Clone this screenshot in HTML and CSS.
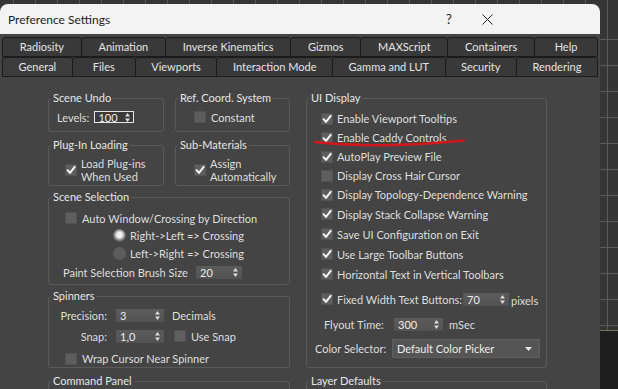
FILE: index.html
```html
<!DOCTYPE html>
<html lang="en">
<head>
    <meta charset="UTF-8">
    <meta name="viewport" content="width=device-width, initial-scale=1.0">
    <title>Preference Settings</title>
    <link rel="stylesheet" href="styles.css">
</head>
<body>

<div class="window">
    <div class="titlebar">
        <span class="title">Preference Settings</span>
        <span class="title-btn">?</span>
        <span class="title-btn">
            <svg class="close-icon" viewBox="0 0 11 11"><path d="M0.5 0.5 L10.5 10.5 M10.5 0.5 L0.5 10.5"/></svg>
        </span>
    </div>

    <div class="dialog">
        <div class="tabs">
            <div class="tab-row">
                <div class="tab">Radiosity</div>
                <div class="tab">Animation</div>
                <div class="tab">Inverse Kinematics</div>
                <div class="tab">Gizmos</div>
                <div class="tab">MAXScript</div>
                <div class="tab">Containers</div>
                <div class="tab">Help</div>
            </div>
            <div class="tab-row">
                <div class="tab active">General</div>
                <div class="tab">Files</div>
                <div class="tab">Viewports</div>
                <div class="tab">Interaction Mode</div>
                <div class="tab">Gamma and LUT</div>
                <div class="tab">Security</div>
                <div class="tab">Rendering</div>
            </div>
        </div>

        <div class="panel">
            <!-- left column -->
            <div class="col col-left">
                <div class="pair">
                    <div class="group undo">
                        <span class="group-title">Scene Undo</span>
                        <div class="row levels-row">
                            <span>Levels:</span>
                            <div class="spin focus w40">
                                <span>100</span>
                                <svg class="arrows" viewBox="0 0 5 9"><path d="M2.5 0 L5 3.5 H0Z M0 5.5 H5 L2.5 9Z"/></svg>
                            </div>
                        </div>
                    </div>
                    <div class="group undo">
                        <span class="group-title">Ref. Coord. System</span>
                        <div class="row single-row">
                            <span class="cb"></span>
                            <span>Constant</span>
                        </div>
                    </div>
                </div>

                <div class="pair gap-13">
                    <div class="group plugin">
                        <span class="group-title">Plug-In Loading</span>
                        <div class="row two-line left-16">
                            <span class="cb on"><svg viewBox="0 0 10 10"><path d="M1.6 5.2 L4 7.9 L8.7 1.8"/></svg></span>
                            <span class="lines">Load Plug-ins<br>When Used</span>
                        </div>
                    </div>
                    <div class="group plugin">
                        <span class="group-title">Sub-Materials</span>
                        <div class="row two-line left-18">
                            <span class="cb on"><svg viewBox="0 0 10 10"><path d="M1.6 5.2 L4 7.9 L8.7 1.8"/></svg></span>
                            <span class="lines">Assign<br>Automatically</span>
                        </div>
                    </div>
                </div>

                <div class="group selection gap-11">
                    <span class="group-title">Scene Selection</span>
                    <div class="row h18 left-16 top-5">
                        <span class="cb"></span>
                        <span>Auto Window/Crossing by Direction</span>
                    </div>
                    <div class="row h17 left-64">
                        <span class="radio on"></span>
                        <span>Right-&gt;Left =&gt; Crossing</span>
                    </div>
                    <div class="row h18 left-64">
                        <span class="radio"></span>
                        <span>Left-&gt;Right =&gt; Crossing</span>
                    </div>
                    <div class="row h20 left-14">
                        <span class="paint-label">Paint Selection Brush Size</span>
                        <div class="spin w46">
                            <span>20</span>
                            <svg class="arrows" viewBox="0 0 5 9"><path d="M2.5 0 L5 3.5 H0Z M0 5.5 H5 L2.5 9Z"/></svg>
                        </div>
                    </div>
                </div>

                <div class="group spinners gap-11">
                    <span class="group-title">Spinners</span>
                    <div class="row h14 left-6 top-5">
                        <span class="spin-label">Precision:</span>
                        <div class="spin w48">
                            <span>3</span>
                            <svg class="arrows" viewBox="0 0 5 9"><path d="M2.5 0 L5 3.5 H0Z M0 5.5 H5 L2.5 9Z"/></svg>
                        </div>
                        <span class="after">Decimals</span>
                    </div>
                    <div class="row h14 left-6 top-7">
                        <span class="spin-label">Snap:</span>
                        <div class="spin w48">
                            <span>1,0</span>
                            <svg class="arrows" viewBox="0 0 5 9"><path d="M2.5 0 L5 3.5 H0Z M0 5.5 H5 L2.5 9Z"/></svg>
                        </div>
                        <span class="cb snap-cb"></span>
                        <span>Use Snap</span>
                    </div>
                    <div class="row h15 left-16 top-8">
                        <span class="cb"></span>
                        <span>Wrap Cursor Near Spinner</span>
                    </div>
                </div>

                <div class="group stub gap-13">
                    <span class="group-title">Command Panel</span>
                </div>
            </div>

            <!-- right column -->
            <div class="col col-right">
                <div class="group ui-display">
                    <span class="group-title">UI Display</span>
                    <div class="checks">
                        <div class="row h19 left-14">
                            <span class="cb on"><svg viewBox="0 0 10 10"><path d="M1.6 5.2 L4 7.9 L8.7 1.8"/></svg></span>
                            <span>Enable Viewport Tooltips</span>
                        </div>
                        <div class="row h19 left-14">
                            <span class="cb on"><svg viewBox="0 0 10 10"><path d="M1.6 5.2 L4 7.9 L8.7 1.8"/></svg></span>
                            <span>Enable Caddy Controls</span>
                        </div>
                        <div class="row h19 left-14">
                            <span class="cb on"><svg viewBox="0 0 10 10"><path d="M1.6 5.2 L4 7.9 L8.7 1.8"/></svg></span>
                            <span>AutoPlay Preview File</span>
                        </div>
                        <div class="row h19 left-14">
                            <span class="cb"></span>
                            <span>Display Cross Hair Cursor</span>
                        </div>
                        <div class="row h19 left-14">
                            <span class="cb on"><svg viewBox="0 0 10 10"><path d="M1.6 5.2 L4 7.9 L8.7 1.8"/></svg></span>
                            <span>Display Topology-Dependence Warning</span>
                        </div>
                        <div class="row h20 left-14">
                            <span class="cb on"><svg viewBox="0 0 10 10"><path d="M1.6 5.2 L4 7.9 L8.7 1.8"/></svg></span>
                            <span>Display Stack Collapse Warning</span>
                        </div>
                        <div class="row h20 left-14">
                            <span class="cb on"><svg viewBox="0 0 10 10"><path d="M1.6 5.2 L4 7.9 L8.7 1.8"/></svg></span>
                            <span>Save UI Configuration on Exit</span>
                        </div>
                        <div class="row h20 left-14">
                            <span class="cb on"><svg viewBox="0 0 10 10"><path d="M1.6 5.2 L4 7.9 L8.7 1.8"/></svg></span>
                            <span>Use Large Toolbar Buttons</span>
                        </div>
                        <div class="row h20 left-14">
                            <span class="cb on"><svg viewBox="0 0 10 10"><path d="M1.6 5.2 L4 7.9 L8.7 1.8"/></svg></span>
                            <span>Horizontal Text in Vertical Toolbars</span>
                        </div>
                        <div class="row h20 left-14 top-5">
                            <span class="cb on"><svg viewBox="0 0 10 10"><path d="M1.6 5.2 L4 7.9 L8.7 1.8"/></svg></span>
                            <span class="fixed-label">Fixed Width Text Buttons:</span>
                            <div class="spin w46">
                                <span>70</span>
                                <svg class="arrows" viewBox="0 0 5 9"><path d="M2.5 0 L5 3.5 H0Z M0 5.5 H5 L2.5 9Z"/></svg>
                            </div>
                            <span class="pixels">pixels</span>
                        </div>
                    </div>
                    <div class="row h20 left-17 top-5">
                        <span class="flyout-label">Flyout Time:</span>
                        <div class="spin w49">
                            <span>300</span>
                            <svg class="arrows" viewBox="0 0 5 9"><path d="M2.5 0 L5 3.5 H0Z M0 5.5 H5 L2.5 9Z"/></svg>
                        </div>
                        <span class="msec">mSec</span>
                    </div>
                    <div class="row h19 left-8 top-5">
                        <span class="color-label">Color Selector:</span>
                        <div class="select">
                            <span>Default Color Picker</span>
                            <svg class="drop" viewBox="0 0 7 4"><path d="M0 0 H7 L3.5 4Z"/></svg>
                        </div>
                    </div>

                    <!-- red pen mark drawn over the screenshot -->
                    <svg class="scribble" viewBox="0 0 170 60"><path d="M8 43 Q 75 50 157 41.5"/></svg>
                </div>

                <div class="group stub gap-13">
                    <span class="group-title">Layer Defaults</span>
                </div>
            </div>
        </div>
    </div>
</div>

</body>
</html>
```

FILE: styles.css
```css
* {
    box-sizing: border-box;
}
body {
    margin: 0;
    width: 618px;
    height: 389px;
    overflow: hidden;
    font-family: Lato, "Noto Sans", sans-serif;
    font-size: 11px;
    color: #dedede;
    background-color: #353535;
    background-image:
        linear-gradient(to bottom, transparent 330px, #7d725e 330px, #7d725e 331px, #1e1e1e 331px),
        repeating-linear-gradient(to bottom, transparent 0 25px, #5a5a5a 25px 26px),
        repeating-linear-gradient(to right, transparent 0 13px, #5a5a5a 13px 14px, transparent 14px 22px);
    background-position: 0 0, 0 14px, 0 0;
}
.window {
    width: 600px;
    height: 385px;
    margin-top: 4px;
    display: flex;
    flex-direction: column;
}

/* Title bar */
.titlebar {
    height: 30px;
    flex: none;
    display: flex;
    align-items: center;
    padding: 0 94px 0 8px;
    background: #f3f3f3;
    border-radius: 8px 8px 0 0;
    color: #1b1b1b;
    font-size: 12px;
}
.title {
    flex: 1;
}
.title-btn {
    width: 38px;
    display: flex;
    justify-content: center;
    font-size: 13px;
}
.close-icon {
    width: 11px;
    height: 11px;
    stroke: #222;
    stroke-width: 1;
}

/* Dialog body */
.dialog {
    flex: 1;
    background: #444;
    overflow: hidden;
}
.tabs {
    padding: 3px 2px 0 2px;
}
.tab-row {
    display: flex;
    height: 20px;
}
.tab {
    flex: 1 1 auto;
    min-width: 64px;
    margin-right: -1px;
    text-align: center;
    line-height: 18px;
    color: #e4e4e4;
    background: #393939;
    border: 1px solid #1b1b1b;
    border-radius: 3px 3px 0 0;
}
.tab:last-child {
    margin-right: 0;
}
.tab.active {
    background: #3c3c3c;
}

.panel {
    display: flex;
    gap: 16px;
    padding: 21px 0 0 48px;
}
.col-left {
    width: 242px;
}
.col-right {
    width: 241px;
}
.pair {
    display: flex;
    gap: 11px;
}
.pair .group:first-child {
    width: 116px;
}
.pair .group:last-child {
    width: 115px;
}

/* Group boxes */
.group {
    position: relative;
    border: 1px solid #5a5a5a;
    border-radius: 3px;
}
.group-title {
    display: block;
    width: fit-content;
    height: 14px;
    line-height: 14px;
    margin: -8px 0 0 2px;
    padding: 0 2px;
    background: #444;
    color: #e6e6e6;
}
.undo { height: 34px; }
.plugin { height: 41px; }
.selection { height: 88px; }
.spinners { height: 72px; }
.ui-display { height: 270px; }
.stub { height: 30px; }

.gap-11 { margin-top: 11px; }
.gap-13 { margin-top: 13px; }

.row {
    display: flex;
    align-items: center;
    white-space: nowrap;
}
.h14 { height: 14px; }
.h15 { height: 15px; }
.h17 { height: 17px; }
.h18 { height: 18px; }
.h19 { height: 19px; }
.h20 { height: 20px; }
.top-5 { margin-top: 5px; }
.top-7 { margin-top: 7px; }
.top-8 { margin-top: 8px; }
.left-6 { padding-left: 6px; }
.left-8 { padding-left: 8px; }
.left-14 { padding-left: 14px; }
.left-16 { padding-left: 16px; }
.left-17 { padding-left: 17px; }
.left-18 { padding-left: 18px; }
.left-64 { padding-left: 64px; }

.levels-row {
    height: 14px;
    margin-top: 5px;
    padding-left: 8px;
    gap: 5px;
}
.single-row {
    height: 14px;
    margin-top: 5px;
    padding-left: 18px;
}
.two-line {
    height: 26px;
    margin-top: 5px;
}
.lines {
    line-height: 13px;
    margin-left: -1px;
}
.checks {
    margin-top: 4px;
}

/* Checkboxes & radios */
.cb {
    width: 12px;
    height: 12px;
    flex: none;
    margin-right: 5px;
    display: flex;
    align-items: center;
    justify-content: center;
    background: #5e5e5e;
    border: 1px solid #525252;
}
.cb svg {
    width: 10px;
    height: 10px;
    fill: none;
    stroke: #f4f4f4;
    stroke-width: 2;
    stroke-linecap: round;
    stroke-linejoin: round;
}
.ui-display .cb {
    margin-right: 4px;
}
.snap-cb {
    margin-left: 10px;
}
.radio {
    width: 13px;
    height: 13px;
    flex: none;
    margin-right: 4px;
    border-radius: 50%;
    background: #5c5c5c;
}
.radio.on {
    background: radial-gradient(circle at 50% 45%, #f2f2f2 0 2.5px, #b8b8b8 4px, #5e5e5e 6.5px);
}

/* Spinners and dropdown */
.spin {
    height: 13px;
    display: flex;
    align-items: center;
    justify-content: space-between;
    padding: 0 4px;
    color: #ececec;
    background: linear-gradient(#5c5c5c, #525252);
}
.spin.focus {
    height: 12px;
    padding: 0 3px;
    background: #3b3b3b;
    border: 1px solid #e6e6e6;
}
.w40 { width: 40px; }
.w46 { width: 46px; }
.w48 { width: 48px; margin-left: 9px; }
.w49 { width: 49px; }
.arrows {
    width: 5px;
    height: 9px;
    fill: #dcdcdc;
}
.paint-label { width: 133px; }
.spin-label {
    width: 52px;
    text-align: right;
}
.after { margin-left: 8px; }
.fixed-label { width: 126px; }
.pixels {
    margin-left: 2px;
    padding-top: 2px;
}
.flyout-label { width: 70px; }
.msec { margin-left: 6px; }
.color-label { width: 77px; }
.select {
    width: 148px;
    height: 19px;
    display: flex;
    align-items: center;
    justify-content: space-between;
    padding: 0 7px 0 4px;
    color: #ececec;
    background: #555;
    border: 1px solid #5f5f5f;
}
.drop {
    width: 7px;
    height: 4px;
    fill: #e4e4e4;
}

/* annotation on top of the dialog */
.scribble {
    position: absolute;
    left: 0;
    top: 0;
    width: 170px;
    height: 60px;
    fill: none;
    stroke: #d3161e;
    stroke-width: 2.5;
    stroke-linecap: round;
}
```
